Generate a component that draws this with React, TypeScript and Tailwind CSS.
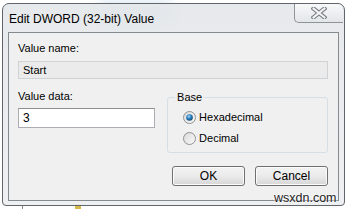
import React from "react";

const font = { fontFamily: '"Liberation Sans", Arial, sans-serif' };

function Radio({ checked, label }: { checked?: boolean; label: string }) {
  return (
    <div className="flex items-center h-[20px]">
      <svg width="13" height="13" viewBox="0 0 13 13" className="ml-[15px] mr-[3px]">
        <defs>
          <linearGradient id={`rg-${label}`} x1="0" y1="0" x2="1" y2="1">
            <stop offset="0" stopColor="#d8d8d8" />
            <stop offset="1" stopColor="#fbfbfb" />
          </linearGradient>
          <radialGradient id="dot" cx="0.4" cy="0.35" r="0.7">
            <stop offset="0" stopColor="#a9dcf5" />
            <stop offset="0.45" stopColor="#2d83c4" />
            <stop offset="1" stopColor="#12406e" />
          </radialGradient>
        </defs>
        <circle cx="6.5" cy="6.5" r="6" fill={`url(#rg-${label})`} stroke="#8f9193" strokeWidth="1" />
        {checked && <circle cx="6.5" cy="6.5" r="3.3" fill="url(#dot)" />}
      </svg>
      <span>{label}</span>
    </div>
  );
}

function Button({ children }: { children: React.ReactNode }) {
  return (
    <div className="w-[73px] h-[20px] rounded-[3px] border border-[#707070] bg-gradient-to-b from-[#f2f2f2] via-[#ebebeb] to-[#d6d6d6] flex items-center justify-center text-[12px] shadow-[inset_0_0_0_1px_#fbfbfb]">
      {children}
    </div>
  );
}

export default function App() {
  return (
    <div className="w-[348px] h-[209px] bg-white relative overflow-hidden pt-[3px] pl-[2px] text-black" style={font}>
      {/* blurred stuff behind the glass */}
      <div className="absolute left-[95px] top-[2px] w-[80px] h-[22px] rounded-full bg-[#bcd3e6] blur-[6px] opacity-60" />
      <div className="absolute left-[75px] top-[204px] w-[6px] h-[6px] bg-[#d9b84a]" />
      <div className="absolute left-[22px] top-[205px] w-px h-[4px] bg-[#888]" />

      <div className="relative w-[343px] h-[203px] border border-[#60666b] rounded-t-[7px] rounded-b-[4px] bg-gradient-to-b from-[#e4e7ea]/90 to-[#eceef0]/90 flex flex-col px-[5px] pb-[4px]">
        {/* title bar */}
        <div className="h-[28px] flex items-start justify-between">
          <div className="pt-[8px] pl-[1px] text-[12px] leading-[15px]">Edit DWORD (32-bit) Value</div>
          <div className="-mr-[4px] w-[49px] h-[19px] rounded-bl-[5px] rounded-tr-[6px] border-l border-b border-[#8e9398] bg-gradient-to-b from-[#f7f8f9] to-[#e3e6e9] flex items-center justify-center">
            <svg width="16" height="12" viewBox="0 0 16 12">
              <path d="M2.5 1.5 L13.5 10.5 M13.5 1.5 L2.5 10.5" stroke="#7b8086" strokeWidth="4.2" strokeLinecap="square" />
              <path d="M2.5 1.5 L13.5 10.5 M13.5 1.5 L2.5 10.5" stroke="#f2f3f4" strokeWidth="2" strokeLinecap="square" />
            </svg>
          </div>
        </div>

        {/* client area */}
        <div className="flex-1 border border-[#858a8f] bg-[#f0f0f0] pl-[9px] pr-[10px] pt-[8px] text-[11px] leading-[15px]">
          <div>Value name:</div>
          <div className="mt-[5px] h-[18px] border border-[#cfd3d6] bg-[#ebebeb] pl-[4px] flex items-center">Start</div>

          <div className="mt-[10px] flex">
            <div className="w-[138px]">
              <div>Value data:</div>
              <div className="mt-[4px] h-[20px] border border-[#abadb3] border-t-[#8e8f8f] bg-white pl-[4px] flex items-center text-[12px]">3</div>
            </div>
            <fieldset className="ml-[12px] mt-[1px] w-[162px] h-[63px] border border-[#d5dfe5] rounded-[3px] px-0">
              <legend className="ml-[7px] px-[2px] leading-[15px]">Base</legend>
              <div className="mt-[2px]">
                <Radio checked label="Hexadecimal" />
                <div className="mt-[1px]">
                  <Radio label="Decimal" />
                </div>
              </div>
            </fieldset>
          </div>

          <div className="mt-[13px] flex justify-end gap-[10px]">
            <Button>OK</Button>
            <Button>Cancel</Button>
          </div>
        </div>
      </div>

      <div className="absolute left-[274px] top-[191px] text-[12.5px] leading-[14px] text-[#222] [text-shadow:0_0_2px_#fff,0_0_2px_#fff]">wsxdn.com</div>
    </div>
  );
}
